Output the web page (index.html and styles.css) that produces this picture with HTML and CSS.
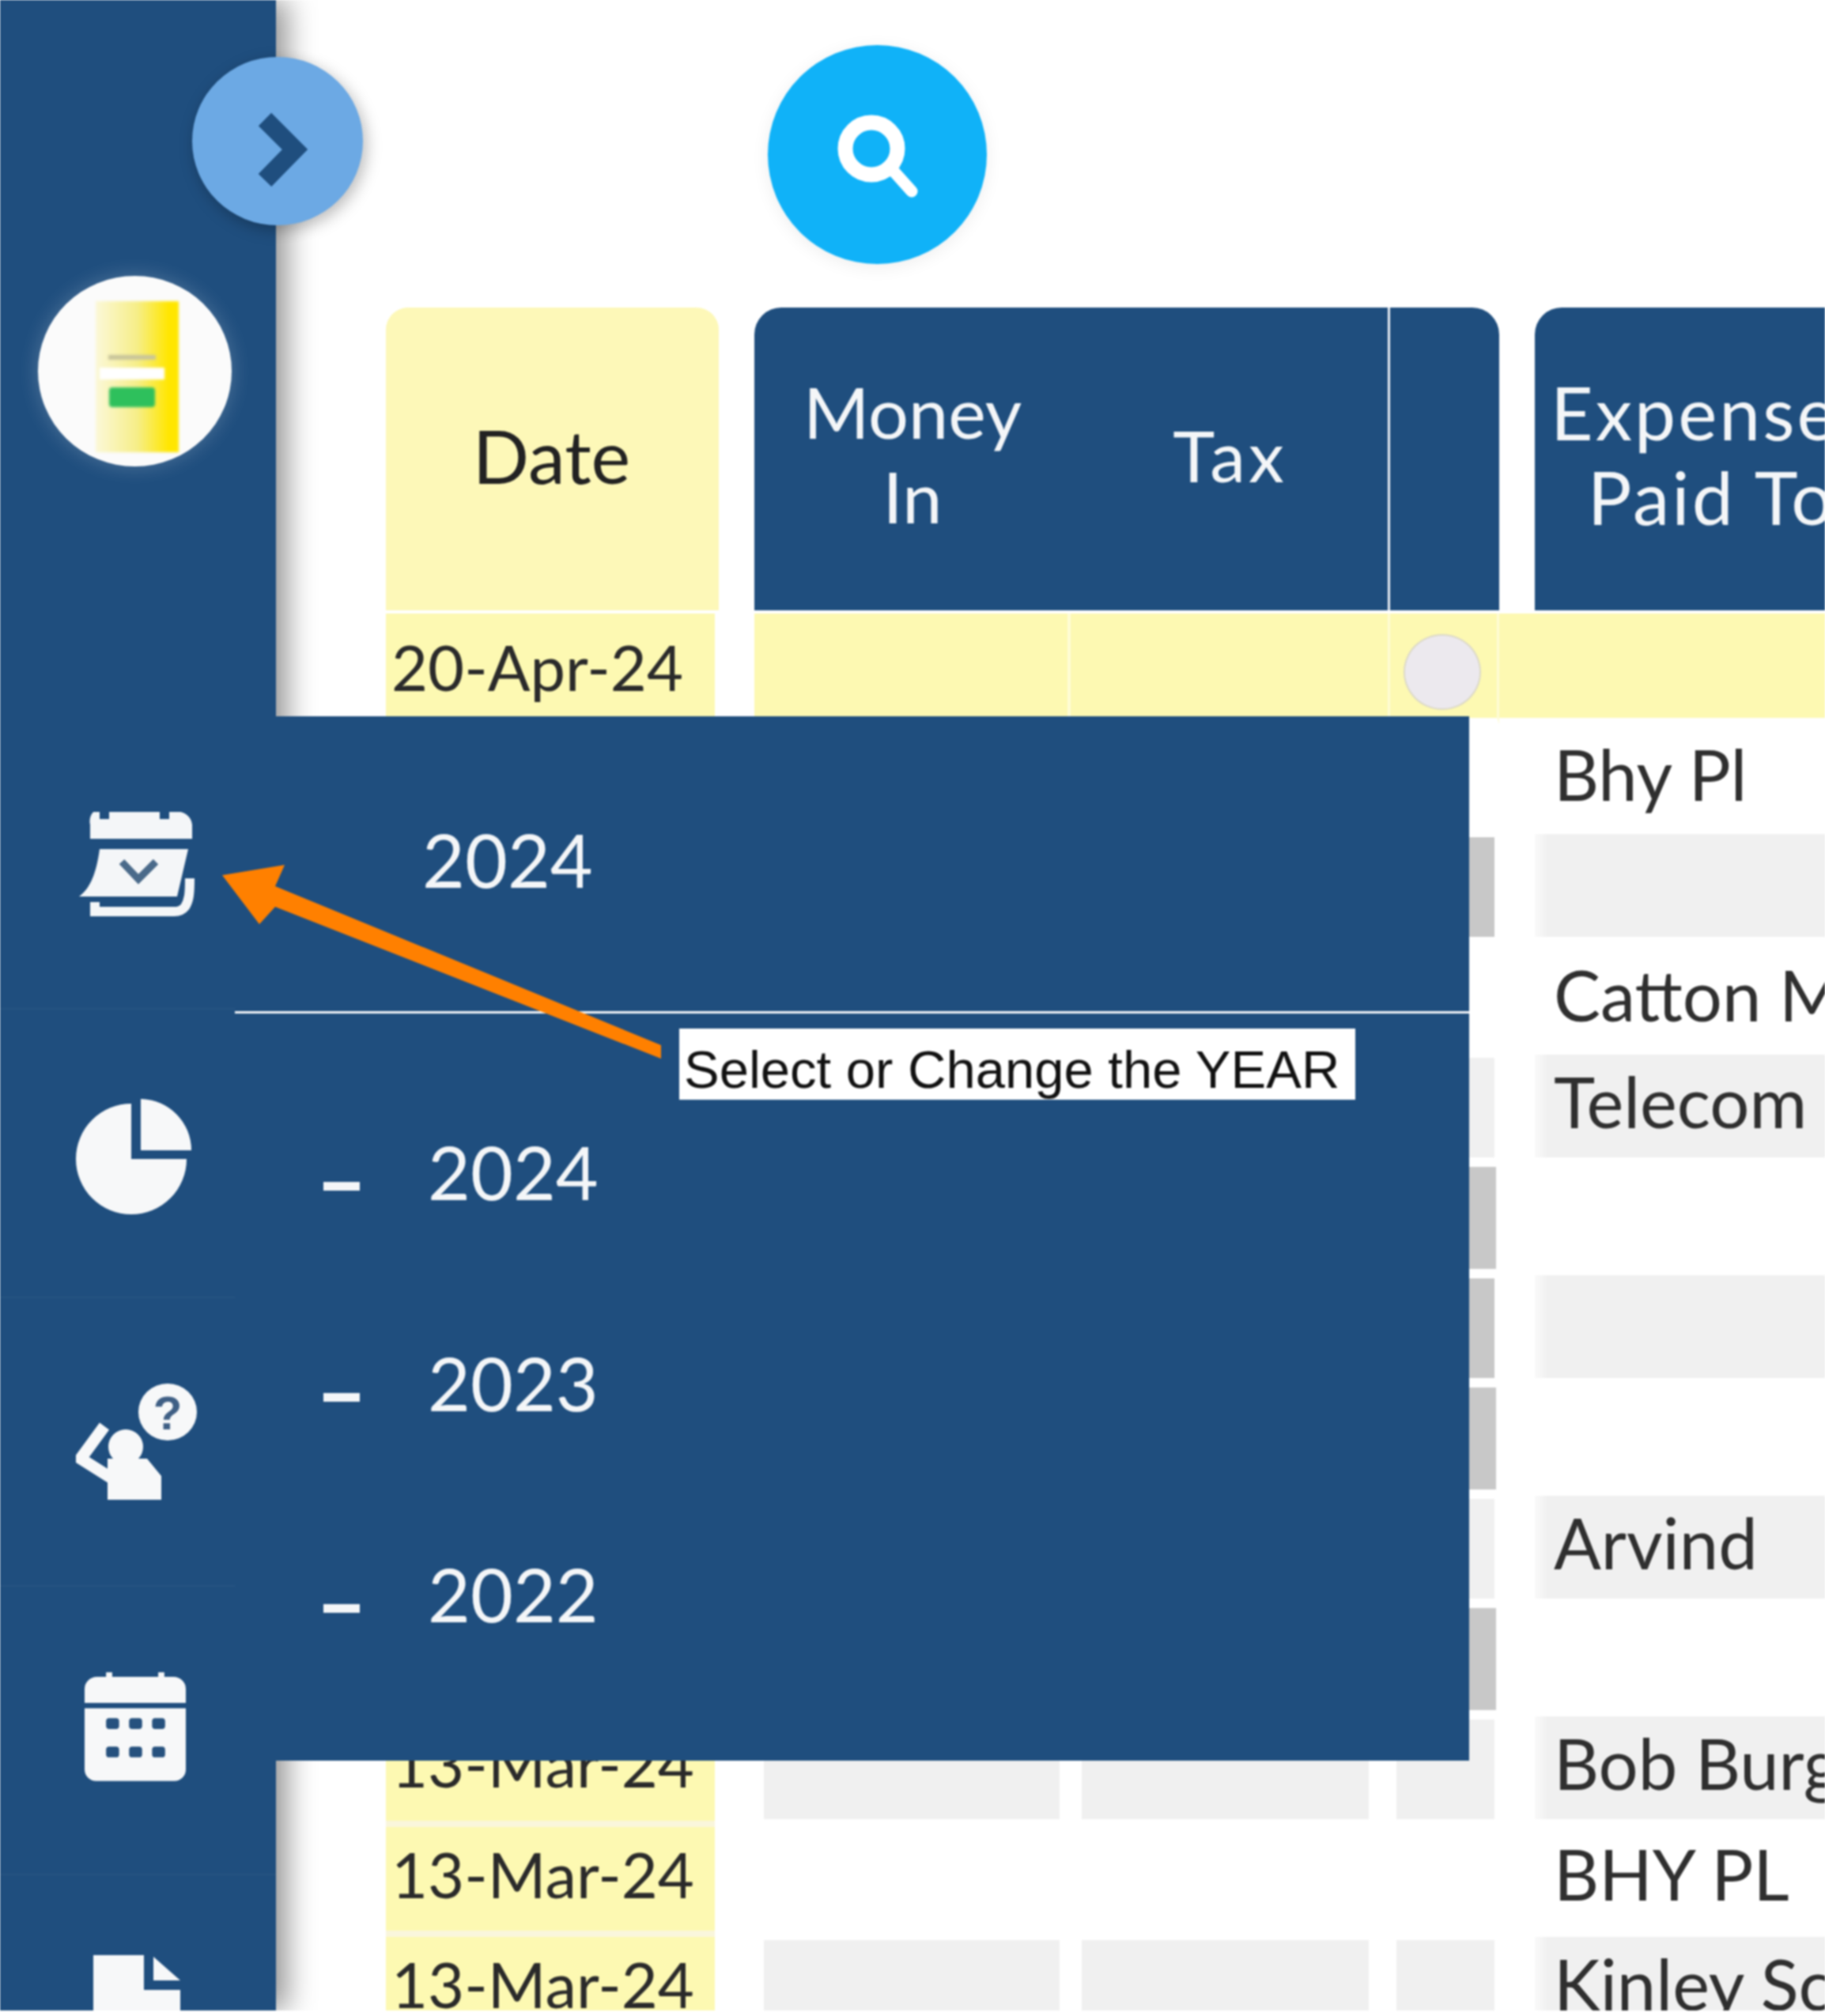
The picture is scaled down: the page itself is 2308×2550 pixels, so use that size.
FILE: index.html
```html
<!DOCTYPE html>
<html lang="en">
<head>
<meta charset="utf-8">
<title>Expenses</title>
<link rel="stylesheet" href="styles.css">
</head>
<body>
<div class="app">
  <aside class="sidebar">
    <div class="avatar"><div class="thumb"><div class="thumb-line"></div><div class="thumb-input"></div><div class="thumb-btn"></div></div></div>
    <nav class="nav">
      <div class="nav-item">
        <svg class="ic-cal-check" viewBox="0 0 146 134"><path d="M18 0h8v9h12V0h64v9h12V0h8a18 18 0 0 1 21 16v18H14V16A18 18 0 0 1 18 0z" fill="#f4f6f8"/><path d="M26 47h112l-14 60H0c14-10 22-30 26-60z" fill="#f4f6f8"/><path d="M54 63l21 22 22-22" fill="none" stroke="#4a6a8a" stroke-width="9"/><path d="M140 84c0 20-1 28-6 36-3 4-8 6-14 6H20v-12" fill="none" stroke="#f4f6f8" stroke-width="12"/></svg>
      </div>
      <div class="nav-item">
        <svg class="ic-pie" viewBox="0 0 146 148"><path d="M70 7V77H140A70 70 0 1 1 70 7z" fill="#f7f8f9"/><path d="M82 1A65 65 0 0 1 146 66H82z" fill="#f7f8f9"/></svg>
      </div>
      <div class="nav-item">
        <svg class="ic-help" viewBox="0 0 153 147"><ellipse cx="116" cy="36" rx="37" ry="36" fill="#f7f8f9"/><text x="116" y="58" text-anchor="middle" class="q">?</text><circle cx="63" cy="80" r="22" fill="#f7f8f9"/><path d="M40 95h50l18 22v30H40z" fill="#f7f8f9"/><path d="M36 54L6 95l38 24" fill="none" stroke="#f7f8f9" stroke-width="15"/></svg>
      </div>
      <div class="nav-item">
        <svg class="ic-cal" viewBox="0 0 132 142"><path d="M16 6h12V0h8v6h60V0h8v6h12a16 16 0 0 1 16 16v18H0V22A16 16 0 0 1 16 6z" fill="#f7f8f9"/><path d="M0 47h132v80a15 15 0 0 1-15 15H15a15 15 0 0 1-15-15z" fill="#f7f8f9"/><g fill="#26517e"><rect x="28" y="60" width="17" height="14" rx="4"/><rect x="58" y="60" width="17" height="14" rx="4"/><rect x="88" y="60" width="17" height="14" rx="4"/><rect x="28" y="97" width="17" height="14" rx="4"/><rect x="58" y="97" width="17" height="14" rx="4"/><rect x="88" y="97" width="17" height="14" rx="4"/></g></svg>
      </div>
      <div class="nav-item">
        <svg class="ic-doc" viewBox="0 0 110 120"><path d="M0 0H64V44H110V120H0z" fill="#f7f8f9"/><path d="M76 2L110 32H76z" fill="#f7f8f9"/></svg>
      </div>
    </nav>
  </aside>

  <main class="main">
    <div class="toolbar">
      <button class="search" type="button" aria-label="Search"><svg viewBox="0 0 277 277"><circle cx="131" cy="131" r="33" fill="none" stroke="#fff" stroke-width="19"/><path d="M156 156l26 29" fill="none" stroke="#fff" stroke-width="15" stroke-linecap="round"/></svg></button>
    </div>
    <div class="table">
      <div class="head">
        <div class="h-date">Date</div>
        <div class="h-group">
          <div class="h-money">Money<br>In</div>
          <div class="h-tax">Tax</div>
          <div class="h-toggle"></div>
        </div>
        <div class="h-exp">Expenses<br>Paid To</div>
      </div>
      <div class="row first">
        <div class="date">20-Apr-24</div>
        <div class="c money"></div><div class="c tax"></div>
        <div class="c toggle"><span class="dot"></span></div>
        <div class="c gap"></div><div class="c exp"></div>
      </div>
      <div class="row"><div class="date"></div><div class="c money"></div><div class="c tax"></div><div class="c toggle"></div><div class="c gap"></div><div class="c exp low">Bhy Pl</div></div>
      <div class="row zebra"><div class="date"></div><div class="c money"></div><div class="c tax"></div><div class="c toggle dim"></div><div class="c gap"></div><div class="c exp"></div></div>
      <div class="row"><div class="date"></div><div class="c money"></div><div class="c tax"></div><div class="c toggle"></div><div class="c gap"></div><div class="c exp low">Catton M</div></div>
      <div class="row zebra"><div class="date"></div><div class="c money"></div><div class="c tax"></div><div class="c toggle"></div><div class="c gap"></div><div class="c exp">Telecom</div></div>
      <div class="row"><div class="date"></div><div class="c money"></div><div class="c tax"></div><div class="c toggle dim"></div><div class="c gap"></div><div class="c exp"></div></div>
      <div class="row zebra"><div class="date"></div><div class="c money"></div><div class="c tax"></div><div class="c toggle dim"></div><div class="c gap"></div><div class="c exp"></div></div>
      <div class="row"><div class="date"></div><div class="c money"></div><div class="c tax"></div><div class="c toggle dim"></div><div class="c gap"></div><div class="c exp"></div></div>
      <div class="row zebra"><div class="date"></div><div class="c money"></div><div class="c tax"></div><div class="c toggle"></div><div class="c gap"></div><div class="c exp">Arvind</div></div>
      <div class="row"><div class="date"></div><div class="c money"></div><div class="c tax"></div><div class="c toggle dim"></div><div class="c gap"></div><div class="c exp"></div></div>
      <div class="row zebra"><div class="date">13-Mar-24</div><div class="c money"></div><div class="c tax"></div><div class="c toggle"></div><div class="c gap"></div><div class="c exp">Bob Burg</div></div>
      <div class="row"><div class="date">13-Mar-24</div><div class="c money"></div><div class="c tax"></div><div class="c toggle"></div><div class="c gap"></div><div class="c exp">BHY PL</div></div>
      <div class="row zebra"><div class="date">13-Mar-24</div><div class="c money"></div><div class="c tax"></div><div class="c toggle"></div><div class="c gap"></div><div class="c exp">Kinley Sc</div></div>
    </div>
  </main>

  <button class="collapse" type="button" aria-label="Expand"><svg viewBox="0 0 216 213"><path d="M92 79l38 38-38 39" fill="none" stroke="#1f4e7e" stroke-width="23"/></svg></button>

  <section class="years">
    <div class="year-current">2024</div>
    <ul class="year-list">
      <li class="year-item"><span class="dash"></span>2024</li>
      <li class="year-item"><span class="dash"></span>2023</li>
      <li class="year-item"><span class="dash"></span>2022</li>
    </ul>
  </section>

  <svg class="arrow" viewBox="0 0 570 250"><polygon points="1,17 80,4 68,31 556,232 556,249 68,57 48,79" fill="#ff8000"/></svg>
  <div class="note">Select or Change the YEAR</div>
</div>
</body>
</html>
```
FILE: styles.css
```css
* { box-sizing: border-box; }
html, body { margin: 0; padding: 0; background: #fff; }
body { width: 2308px; height: 2550px; overflow: hidden; }

.app {
  position: relative;
  display: flex;
  width: 2308px;
  height: 2543px;
  overflow: hidden;
  font-family: "Lato", "Liberation Sans", sans-serif;
  filter: blur(0.8px);
}

/* Sidebar */
.sidebar {
  position: relative;
  z-index: 2;
  flex: 0 0 349px;
  padding-top: 349px;
  background: #1f4e7e;
  box-shadow: 14px 0 34px rgba(0, 0, 0, 0.42);
  overflow: hidden;
}
.avatar {
  display: flex;
  justify-content: center;
  width: 245px;
  height: 241px;
  margin-left: 48px;
  padding: 32px 0 0 6px;
  background: #fbfbfb;
  border-radius: 50%;
  box-shadow: 0 0 26px rgba(255, 255, 255, 0.22);
}
.thumb {
  display: flex;
  flex-direction: column;
  align-items: center;
  width: 105px;
  height: 191px;
  padding: 68px 14px 0 0;
  background: linear-gradient(90deg, #fbf8d8 0%, #f6ee88 50%, #ffe600 88%);
  filter: blur(1.5px);
}
.thumb-line { width: 60px; height: 6px; background: #c8c49a; }
.thumb-input { width: 82px; height: 15px; margin-top: 10px; background: #fff; }
.thumb-btn { width: 58px; height: 25px; margin-top: 10px; background: #2ec05c; border-radius: 4px; }

.nav { margin-top: 322px; }
.nav-item {
  display: flex;
  align-items: center;
  justify-content: center;
  height: 365px;
  padding-right: 4px;
  border-bottom: 2px solid rgba(255, 255, 255, 0.03);
}
.nav-item svg { display: block; }
.ic-cal-check { width: 146px; height: 134px; }
.ic-pie { width: 146px; height: 148px; margin: 8px 8px 0 0; }
.ic-help { width: 153px; height: 147px; }
.ic-cal { width: 128px; height: 142px; margin: 0 4px 10px 0; }
.ic-doc { width: 110px; height: 120px; margin-top: -42px; }
.q { font: 700 60px "Liberation Sans", sans-serif; fill: #3f5f85; }

/* Main */
.main { flex: 1; min-width: 0; padding-left: 139px; overflow: hidden; }
.toolbar { height: 389px; padding: 57px 0 0 483px; }
.search {
  display: block;
  width: 277px;
  height: 277px;
  padding: 0;
  background: #10b2f8;
  border: 0;
  border-radius: 50%;
  box-shadow: 0 4px 22px rgba(0, 0, 0, 0.07);
}
.search svg { display: block; width: 277px; height: 277px; }

.table { width: 1820px; }
.head { display: flex; height: 387px; padding-bottom: 4px; }
.h-date, .h-money, .h-tax, .h-exp {
  display: flex;
  align-items: center;
  justify-content: center;
  font-size: 90px;
  line-height: 107px;
  text-align: center;
}
.h-date {
  flex: 0 0 421px;
  margin-right: 45px;
  padding: 0 2px 10px 0;
  color: #222;
  font-size: 94px;
  background: #fdf8b8;
  border-radius: 28px 28px 0 0;
}
.h-group {
  display: flex;
  flex: 0 0 942px;
  margin-right: 45px;
  overflow: hidden;
  color: #f4f6f8;
  background: #1f4e7e;
  border-radius: 34px 34px 0 0;
}
.h-money { flex: 0 0 396px; padding: 0 0 14px 4px; }
.h-tax { flex: 0 0 405px; padding: 0 0 10px 6px; letter-spacing: 4px; }
.h-toggle { flex: 1; border-left: 3px solid #e8edf2; }
.h-exp {
  flex: 0 0 424px;
  padding: 0 0 12px 20px;
  color: #f4f6f8;
  font-size: 93px;
  letter-spacing: 3px;
  background: #1f4e7e;
  border-radius: 34px 0 0 0;
  white-space: nowrap;
}

.row { display: flex; height: 139.5px; }
.date {
  flex: 0 0 416px;
  margin-right: 50px;
  padding-left: 7px;
  color: #2a2a2a;
  font-size: 79.5px;
  line-height: 120px;
  white-space: nowrap;
  background: #fdf9b2;
  border-bottom: 8px solid #faf6dc;
}
.first .date { line-height: 136px; }
.c { position: relative; }
.money { flex: 0 0 396px; }
.tax { flex: 0 0 405px; }
.toggle { flex: 0 0 141px; }
.gap { flex: 0 0 45px; }
.exp {
  flex: 0 0 367px;
  padding-left: 24px;
  color: #2f2f2f;
  font-size: 88.5px;
  line-height: 118px;
  white-space: nowrap;
  overflow: hidden;
}
.exp.low { line-height: 126px; }
.first .money, .first .tax, .first .toggle, .first .gap, .first .exp {
  background: #fdf9b2;
  border-bottom: 8px solid #fff;
}
.first .tax { border-left: 4px solid #fefcd6; }
.first .toggle { border-left: 3px solid #fefcd6; border-right: 3px solid #fefcd6; }
.dot {
  display: block;
  width: 98px;
  height: 96px;
  margin: 26px 0 0 17px;
  background: #ece9ee;
  border: 2px solid #dcd9c8;
  border-radius: 50%;
}
.zebra .money, .zebra .tax, .zebra .toggle {
  background-color: #f0f0f0;
  background-clip: content-box;
}
.zebra .money { padding: 4px 10px 10px 12px; }
.zebra .tax { padding: 4px 24px 10px 18px; }
.zebra .toggle { padding: 4px 6px 10px 11px; }
.zebra .exp {
  height: 130px;
  background: linear-gradient(90deg, #fafafa, #f0f0f0 16px);
}
.dim { background: #fff; padding: 2px 4px 8px 0; }
.dim::after {
  content: "";
  display: block;
  height: 100%;
  background: #c8c8c8;
}

/* Year menu */
.collapse {
  position: absolute;
  z-index: 3;
  top: 72px;
  left: 243px;
  width: 216px;
  height: 213px;
  padding: 0;
  background: #6ca9e4;
  border: 0;
  border-radius: 50%;
  box-shadow: 4px 6px 20px rgba(0, 0, 0, 0.28);
}
.collapse svg { display: block; width: 216px; height: 213px; }

.years {
  position: absolute;
  z-index: 4;
  top: 906px;
  left: 297px;
  width: 1561px;
  height: 1321px;
  color: #f4f6f8;
  font-size: 93px;
  background: #1f4e7e;
}
.year-current {
  height: 376px;
  padding: 126px 0 0 237px;
  line-height: 110px;
  border-bottom: 3px solid #f2f5f8;
}
.year-list { margin: 0; padding: 66px 0 0; list-style: none; }
.year-item {
  display: flex;
  align-items: center;
  height: 267px;
  padding-left: 112px;
  line-height: 110px;
}
.dash {
  width: 46px;
  height: 11px;
  margin: 38px 86px 0 0;
  background: #f4f6f8;
}

.arrow {
  position: absolute;
  z-index: 5;
  top: 1090px;
  left: 280px;
  width: 570px;
  height: 250px;
}
.note {
  position: absolute;
  z-index: 5;
  top: 1301px;
  left: 859px;
  width: 855px;
  height: 90px;
  padding: 10px 0 0 6px;
  color: #111;
  font-family: "Liberation Sans", Arial, sans-serif;
  font-size: 67px;
  line-height: 84px;
  white-space: nowrap;
  background: #fff;
}
```
